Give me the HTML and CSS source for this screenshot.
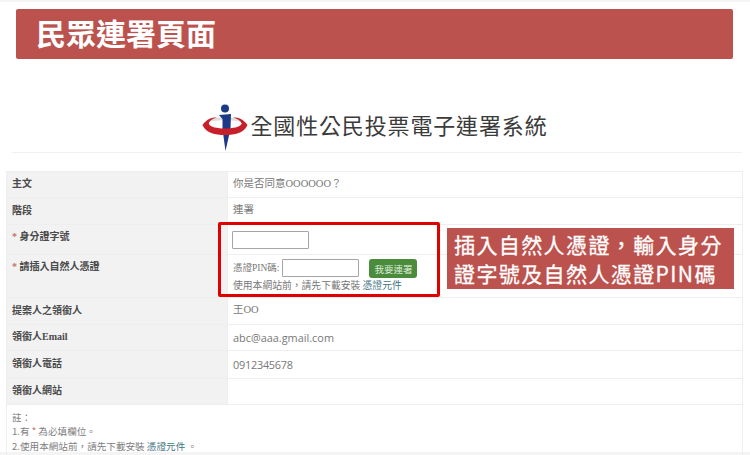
FILE: index.html
```html
<!DOCTYPE html>
<html lang="zh-TW">
  <head>
    <meta charset="utf-8" />
    <meta name="viewport" content="width=device-width, initial-scale=1" />
    <link rel="stylesheet" href="styles.css">
  </head>
  <body>
    <div class="page">
      <div class="banner">民眾連署頁面</div>
      <div class="site-header">
        <svg class="logo" width="46" height="48" viewBox="0 0 46 48">
          <path d="M2 20 C9 11 37 11 44 20 C37 15 9 15 2 20 Z" fill="#dddddd" />
          <path d="M17 11 L29 10 L28.5 25 L23.5 47 L20.5 25 L20.5 15 Z" fill="#1c3a86" />
          <path d="M0.5 21 C5 14 12 13 15 13.5 C9 15 6.5 18 7 20 C9 26 37 26 39.5 20 C40 18.5 37 15 31 13.5 C34 13 41 14 45.5 21 C42 29 33 31 23 31 C13 31 4 29 0.5 21 Z" fill="#c8202a" />
          <circle cx="23" cy="4.5" r="4" fill="#1c3a86" />
        </svg>
        <span class="site-title">全國性公民投票電子連署系統</span>
      </div>
      <div class="form-wrapper">
        <table class="form-table">
          <tr class="h-26">
            <th>主文</th>
            <td>你是否同意OOOOOO？</td>
          </tr>
          <tr class="h-27">
            <th>階段</th>
            <td>連署</td>
          </tr>
          <tr class="h-30">
            <th><span class="star">*</span> 身分證字號</th>
            <td class="input-cell"><input class="text-input" type="text" /></td>
          </tr>
          <tr class="h-43">
            <th class="top"><span class="star">*</span> 請插入自然人憑證</th>
            <td class="top">
              <div class="pin-row">
                <span class="pin-label">憑證PIN碼:</span>
                <input class="text-input" type="text" />
                <button class="sign-btn">我要連署</button>
              </div>
              <div class="hint">使用本網站前，請先下載安裝 <a href="#">憑證元件</a></div>
            </td>
          </tr>
          <tr class="h-27">
            <th>提案人之領銜人</th>
            <td>王OO</td>
          </tr>
          <tr class="h-26">
            <th>領銜人Email</th>
            <td class="latin">abc@aaa.gmail.com</td>
          </tr>
          <tr class="h-28">
            <th>領銜人電話</th>
            <td class="latin phone">0912345678</td>
          </tr>
          <tr class="h-26">
            <th>領銜人網站</th>
            <td></td>
          </tr>
          <tr>
            <td class="notes" colspan="2">
              <div>註：</div>
              <div>1.有 <span class="star">*</span> 為必填欄位。</div>
              <div>2.使用本網站前，請先下載安裝 <a href="#">憑證元件</a> 。</div>
            </td>
          </tr>
        </table>
        <div class="highlight"></div>
        <div class="callout">插入自然人憑證，輸入身分<br />證字號及自然人憑證PIN碼</div>
      </div>
    </div>
  </body>
</html>
```

FILE: styles.css
```css
html,
body,
div {
  margin: 0;
  padding: 0;
  box-sizing: border-box;
}

body {
  background-color: #fff;
  font-family: "Noto Sans CJK TC", sans-serif;
  overflow: hidden;
}

.page {
  width: 750px;
  height: 455px;
  padding-top: 9px;
  border-top: 2px solid #f5f5f5;
  border-bottom: 3px solid #f4f4f4;
}

.banner {
  height: 50px;
  margin: -2px 17px 0 16px;
  padding-left: 20px;
  background-color: #bc524e;
  border-radius: 2px;
  color: #fff;
  font-size: 30px;
  font-weight: 700;
  line-height: 47px;
}

.site-header {
  display: flex;
  align-items: flex-end;
  justify-content: center;
  height: 94px;
  margin: 0 8px 0 12px;
  padding-right: 4px;
  border-bottom: 1px solid #f1f1f1;
}

.logo {
  display: block;
  margin-right: 2px;
}

.site-title {
  margin-bottom: 12px;
  color: #3b3b3b;
  font-size: 22px;
  letter-spacing: 0.85px;
  line-height: 32px;
  white-space: nowrap;
}

.form-wrapper {
  position: relative;
  margin: 18px 7px 0 6px;
}

.form-table {
  width: 737px;
  border-collapse: collapse;
  table-layout: fixed;
  font-size: 10px;
  color: #777;
}

.form-table th,
.form-table td {
  padding: 0 5px 4px;
  border: 1px solid #eeeeee;
  text-align: left;
  vertical-align: middle;
}

.form-table th {
  width: 210px;
  background-color: #f2f2f2;
  color: #4a4a4a;
  font-family: "Liberation Serif", "Noto Sans CJK TC", serif;
  font-weight: 700;
}

.form-table td {
  padding-bottom: 2px;
  font-family: "Liberation Serif", "Noto Sans CJK TC", serif;
  font-size: 10.5px;
  line-height: 14px;
}

.form-table .top {
  vertical-align: top;
  padding-top: 4px;
  padding-bottom: 0;
}

.form-table th.top {
  padding-top: 3px;
}

.form-table td.latin {
  font-family: "Open Sans", sans-serif;
  font-size: 10.9px;
  padding-bottom: 0;
}

.form-table td.phone {
  letter-spacing: -0.25px;
}

.form-table td.input-cell {
  padding: 0 5px 0 4px;
}

.h-26 {
  height: 26px;
}

.h-27 {
  height: 27px;
}

.h-28 {
  height: 28px;
}

.h-30 {
  height: 30px;
}

.h-30 th {
  padding-bottom: 8px;
}

.h-43 {
  height: 43px;
}

.star {
  color: #c0706d;
}

.text-input {
  display: block;
  width: 77px;
  height: 18px;
  padding: 0;
  border: 1px solid #a5a5a5;
  border-radius: 1px;
  background-color: #fff;
  box-sizing: border-box;
}

.pin-row {
  display: flex;
  align-items: flex-start;
}

.pin-label {
  margin-right: 3px;
  font-size: 9.5px;
  line-height: 18px;
  white-space: nowrap;
}

.sign-btn {
  width: 48px;
  height: 19px;
  margin-left: 10px;
  padding: 0;
  border: 0;
  border-radius: 3px;
  background-color: #4a8b3c;
  color: #dcebd8;
  font-family: "Noto Sans CJK TC", sans-serif;
  font-size: 9.5px;
}

.hint {
  font-family: "Noto Sans CJK TC", sans-serif;
  font-size: 9.8px;
  line-height: 14px;
}

.form-table a {
  color: #3f7484;
  text-decoration: none;
}

.form-table .notes {
  height: 47px;
  padding-top: 3px;
  padding-bottom: 0;
  border-bottom: 0;
  font-family: "Noto Sans CJK TC", sans-serif;
  font-size: 9.6px;
  line-height: 14.3px;
  color: #808080;
}

.highlight {
  position: absolute;
  left: 212px;
  top: 51px;
  width: 222px;
  height: 75px;
  border: 3px solid #e00000;
  border-radius: 2px;
}

.callout {
  position: absolute;
  left: 441px;
  top: 57px;
  width: 287px;
  height: 61px;
  padding: 2px 0 0 7px;
  background-color: #bc524e;
  color: #fff;
  font-size: 21px;
  font-weight: 400;
  letter-spacing: 1.4px;
  line-height: 29px;
  white-space: nowrap;
  -webkit-text-stroke: 0.3px #fff;
}
```
